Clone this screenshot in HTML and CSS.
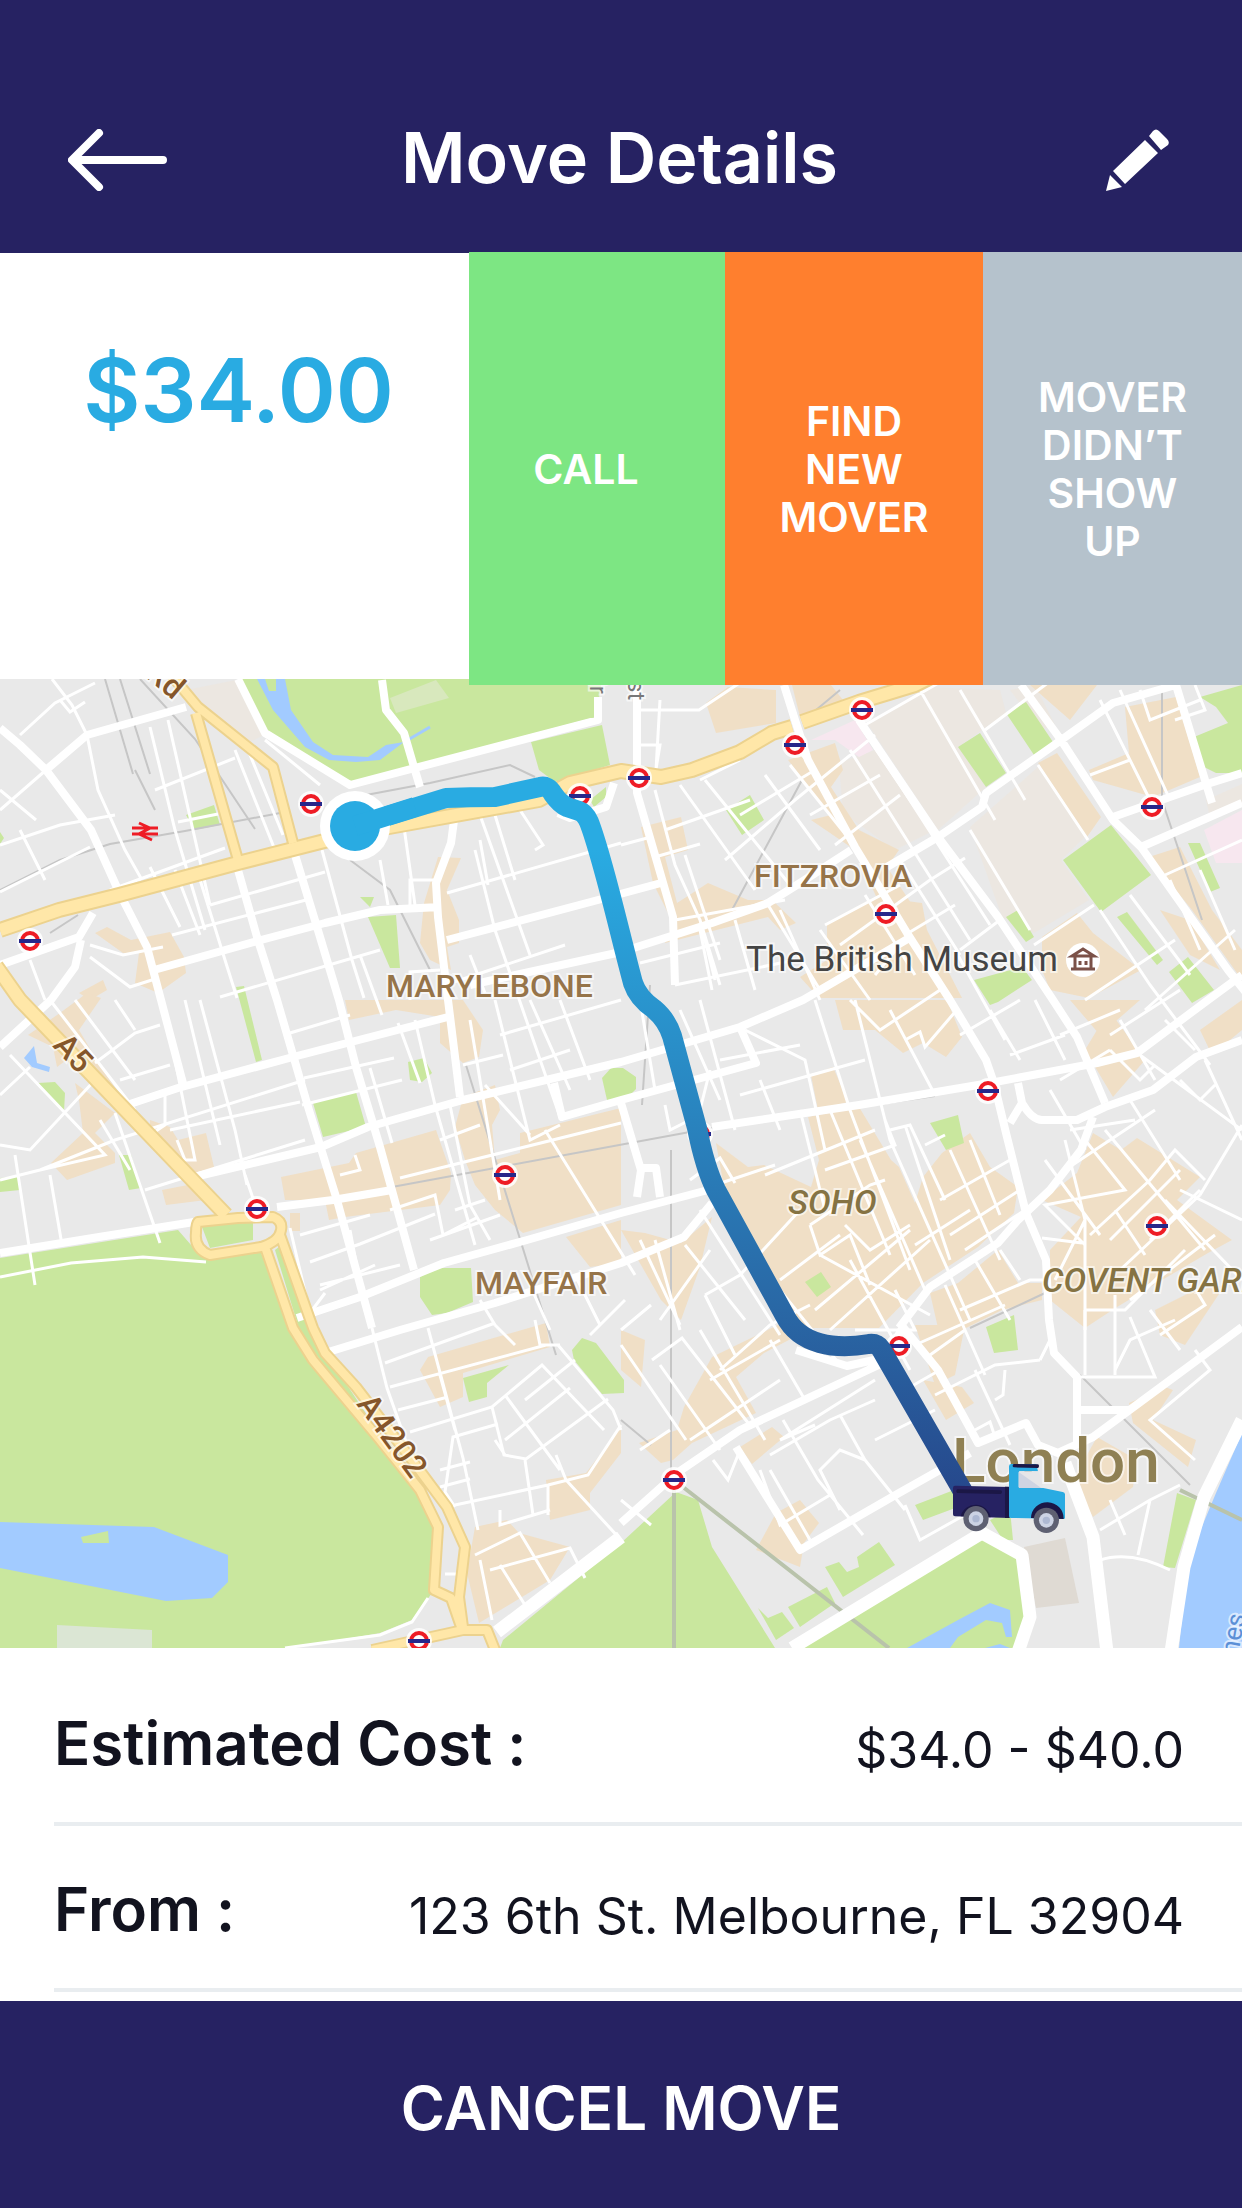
FILE: index.html
```html
<!DOCTYPE html>
<html lang="en">
<head>
<meta charset="utf-8">
<meta name="viewport" content="width=device-width, initial-scale=1">
<title>Move Details</title>
<link rel="stylesheet" href="styles.css">
</head>
<body>
<div class="screen">
  <header class="topbar">
    <button class="icon-button" type="button" aria-label="Back">
      <svg width="99" height="62" viewBox="0 0 99 62" fill="none" stroke="#fff" stroke-width="8" stroke-linecap="round" stroke-linejoin="round" aria-hidden="true">
        <path d="M31 4 4 31l27 27M6 31h89"/>
      </svg>
    </button>
    <h1 class="title">Move Details</h1>
    <button class="icon-button" type="button" aria-label="Edit">
      <svg width="64" height="62" viewBox="0 0 64 62" fill="#fff" aria-hidden="true">
        <path d="M43 7l4-5q3-3 6 0l8 8q3 3 1 6l-7 5zM39 11l13 13-33 31L7 42zM4 46l12 12L0 62z"/>
      </svg>
    </button>
  </header>

  <main class="content">
    <section class="summary">
      <p class="price">$34.00</p>
      <div class="actions">
        <button class="action action-call" type="button">CALL</button>
        <button class="action action-find" type="button">FIND<br>NEW<br>MOVER</button>
        <button class="action action-report" type="button">MOVER<br>DIDN’T<br>SHOW<br>UP</button>
      </div>
    </section>

    <svg class="map" viewBox="0 679 1242 969" role="img" aria-label="Route map of central London">
      <defs>
        <linearGradient id="route-fill" gradientUnits="userSpaceOnUse" x1="0" y1="850" x2="0" y2="1500">
          <stop offset="0" stop-color="#29abe2"/>
          <stop offset=".72" stop-color="#2966a4"/>
          <stop offset="1" stop-color="#26478b"/>
        </linearGradient>
        <g id="tube">
          <circle r="13" fill="#fff" opacity=".85"/>
          <circle r="8" fill="#fff" stroke="#ee1c25" stroke-width="4"/>
          <path d="M-11 0h22" stroke="#27278a" stroke-width="4"/>
        </g>
        <path id="main-road" d="M0 930l59-20 60-15 119-32 59-15 59-15 183-33 31-17 51-12 40 6 31-7 48-18 32-19 20-6M802 722l57-20 56-17 20-10M-4 966l24 34 206 215"/>
        <path id="side-road" d="M172 676l26 31 75 60 20 76M196 713l42 147M198 1222l40-4 35-1q10 4 8 13-2 12-20 17l-51 8q-16-6-14-22 0-9 2-11zM265 1247l28 81 20 32 67 80 40 50 18 37-4 63 17 8 10 29M279 1232l34 96 12 25 31 34 56 73 35 47 18 40-6 50 4 30M372 1650l91-20h24l8 20"/>
      </defs>

      <rect class="land" y="679" width="1242" height="969"/>

      <g class="campus">
        <path d="M867 723l60-36 73 3 6 23-48 34 28 40-48 43zM970 827l68-60 47 70-24 23 28 40-55 33-32-16zM839 763l36-13 60 80-40 20-52-37zM1206 800l36-16v20l-32 14zM1010 690l25-5 20 40-15 5zM186 690l50-10 28 55-20 10z"/>
      </g>
      <g class="hospital">
        <path d="M811 740l44-20 18 30-14 7-24-17zM1204 830l38-20v53h-26z"/>
      </g>

      <g class="shops">
        <path d="M95 933l12-6 24 13 39-8 14 25 2 16-28 20-23-10 4-30h-16zM79 993l24-13 4 10-17 10zM438 857l23 1-14 32 12 30v23l-12 4 4 23-21-10-10-17 4-40zM345 1000h118l20 30-4 27-16 6-23-20v-26l-44-7-47 10z"/>
        <path d="M28 1035l32-22 27-20 14 5-22 32 20 34 36 53-12 0-50-62-16 12-4-20zM75 1083l40 30-20 20 20 20v10l-48 17-16-17 32-30-4-33zM150 1120l20 7 8 13 28-7 8 34-16 13-48-33zM162 1190l36-7 8 17-40 5z"/>
        <path d="M281 1177l68-14 7-10 80-23 15 43-1 17-10 15-95 12-16 3-4-20h-40zM455 1127l8-30 32-12 5 25-8 15 3 35 25-7v-20l101-25v97l-98 28-28-23-20-25-10-25zM566 1237l55-17v43l-31 4zM290 1213h10v18h-10z"/>
        <path d="M706 703l22-16 48 3v33l-60 10zM792 685h39l12 15-43 17zM788 760l47-17 8 27-12 17 28 43 40 20-12 17 24 36-31 2-25-55-44-30 20-5zM641 827l40-10 7 33-23 7 12 46 31-20 40 17h24l24 23-16 7-12-13-103 26 8-20-20-40zM827 923l48-26 47 6 5 27 35 68H819l-19-21 27-17z"/>
        <path d="M835 1000h112l15 37-16 20-23-14-20 10-28-23h-32zM1042 937l35-24 16 20 48 37-52 28-39-8-8-20zM1038 763l19-10 44 64-14 20zM1125 707l51-10 24 80-47 20-60-17-4-10 40-17zM1149 857l31-10 32 63 30 40v30l-50-70zM1030 685h67l-27 35zM1160 910l30 10 30 50-30-15z"/>
        <path d="M716 1143l32 24 16-2 32 15 15 7 8-27-11-43 51-10 32 53 8 7 16 36 8-26 19-24 28-20 20 34 28 20-4 26-36 34-55 36-44 45h-91l-20-61-44-80zM811 1075l22-8 15 35-30 8zM958 1283l40-33 20 33h24v17l-40 10-36 18h-28l-8-35zM1093 1133l28 17 16-12 63 39-23 23 55 40-24 13-51 30-40 24-32 21-35-28v-50l31-33-39-17 35-27zM1085 1050l24-40 36 50-32 37zM1070 1000h70l-40 35z"/>
        <path d="M621 1230l24 3 36 10 31-26-12 50-19 53-20-20zM1155 1310l40-20 30-5-40 60-25-10zM1200 1030l42-30v30l-30 25z"/>
        <path d="M420 1370l8-13 118-34 4 24-87 26v24l-23 10zM475 1527l32-7 12 13 51 14-20 33-71 43-12-50zM546 1480l40-7 35-46v26l-31 40v17l-40 10zM677 1430l7-23 28-50 76-37h39l-63 33-28 24 20 36-64 30-19 17-12 3-22-20zM740 1447l32-20 12 10-32 27zM776 1513l24-13 19 23-15 20-4 24-44-17zM923 1380l39 7 12 16-28 17zM915 1325h50l-10 50-20 10zM1129 1403l36-16 8 3-20 30 43 20-8 27-55-44zM1073 1480l24-43 40 23-4 27-40 30zM621 1330l24 10-4 47-20-17z"/>
      </g>

      <g class="park">
        <path d="M242 679h360l-6 38-246 65-81-44zM531 742l71-17 8 40-55 17-16-12zM590 800l16-13v10l-12 10zM186 815l28-10 6 20-26 5zM360 897h14l-4 10zM368 917l28-2 4 53h-10zM236 987l8-1 18 74-6 2zM0 832l4 6-4 6z"/>
        <path d="M313 1103l43-11 10 35-43 10zM408 1062l16-4 8 15-10 9-12-2zM38 1083l17-1 10 11-1 19zM119 1155h12l10 33-12 2zM0 1178l18-1 2 13-20 2zM420 1277l16-9h35l2 34-26 11-15 2-12-18zM602 1078l9-10h12l13 9 0 12-9 9-20 2z"/>
        <path d="M0 1258l178-28 20 23h63l32 75 20 35 115 144 12 30-8 56-20 27-32 13-87 15H0zM202 1227l51-7v20l-43 8zM275 1250l10-8 30 95 120 180v20l-60-100-75-105z"/>
        <path d="M500 1648l3-8 118-97 55-51 22 8 14 47 63 101zM463 1378l46-13-22 18v14l-18 5zM572 1350l10-12 14 5 28 37v13l-22 1-28-34z"/>
        <path d="M958 747l22-14 26 40-20 14zM1006 713l20-11 27 40-19 13zM1063 860l48-35 40 50-50 37zM1117 917l10-5 36 48-6 5zM1188 843h12l20 45-10 4zM1169 972l19-15 26 33-22 13zM1006 917l12-7 16 27-8 5zM726 810l24-15 14 25-22 15zM974 980l48-13 10 13-34 22-8 3zM1200 697l42-12v88h-26l-12-6-10-30 34-14-12-16z"/>
        <path d="M930 1123l28-8 6 28-18 7zM805 1282l16-10 10 15-14 10zM986 1327l28-12 4 35-24 3zM825 1567l14-5 8 10 12-5-2-10 22-15 16 23-52 32zM788 1607l39-20 8 16-35 24zM758 1608l10 10 14-6 12 16-18 12zM915 1505l39-15 4 17-35 13zM1177 1493l19 7-21 68-12-1zM982 1533l36 20 9 64-13 31H798zM990 1520l20-10 3 30-10 0z"/>
      </g>

      <path fill="#dbe6d4" d="M57 1625l95 5v18H57z"/>
      <path fill="#dfdad3" d="M1024 1547l41-9 14 65-43 5z"/>
      <path fill="#d8e8bd" d="M390 698l46-18 13 18-53 15z"/>

      <g class="water">
        <path d="M257 679h28l6 31 22 32 20 13 35 2 18-12 18-3-24 18-24 2-27-2-24-13-32-37zM0 1522l154 5 74 28v27l-16 16-46 3-166-33zM1242 1433l-26 60-28 67-9 88h63zM907 1648l51-28 32-17 20 7 2 27h-6l-4-14-16-3-28 17-8 11zM985 1648l15-4 10 4zM24 1058l10-12 3 17 13 4-1 5-17-5zM1044 1450l8 5-6 6z"/>
        <path d="M406 741l24-14" stroke="#a2cbff" stroke-width="3"/>
      </g>
      <path class="park" d="M265 679h11v12h-7zM81 1537l27-6 1 12H83z"/>

      <g class="rail">
        <path d="M105 679l28 95M120 679l30 95M135 770l20 40"/>
        <path d="M140 679l55 60 60 90M0 890l60-30 50-16 75-13 95-18M50 933l28-18M350 860l40 30 40 80M350 798l80-15 80-18 25 12M650 985l-8 120M466 1065l90 290M392 1187l325-60M715 1128l220-32M802 780l-70 130M1162 690v110l20 60 20 60M840 690l-30 25M671 1150v330M970 1328l75-35M1080 1375l110 110M621 1420l30 25"/>
      </g>
      <path class="rail rail-wide" d="M674 1480v168M674 1480l215 168M1180 1490l62 30"/>

      <g class="streets">
        <path d="M52 679l20 26 15 30 11 55 27 60 17 30M20 735l35-32 40-20M0 810l46-40M0 845l60-20 55-10M0 790l36 30M60 700l10 12 15-10M150 727l25 103 30 100M168 720l42 185M155 790l80-32M235 750l40 100M248 750l35 85M178 822l40-8M110 890l115-42M0 892l90-45M265 740l55 45M20 830l25 50"/>
        <path d="M150 867l30 60M175 870l25 65M197 870l28 90 12 38M210 905l115-33M172 935l134-35M322 850l30 110 12 38M380 860l8 45M402 813l13 92M440 880h-30v30M447 893l174-50M475 850l20 80 65 187M480 840l8 45M480 815l50 140M520 810l23 35-8 5M495 815l20 65M445 985l30-10 90-30M470 955l15 38M410 1000v-28l30-2M220 997l160-47M90 957l40 30 25-8M30 960l15 40M90 945l33 10 40-8M360 955l22 60"/>
        <path d="M50 1000l85 110M75 1000l60 80M95 1063l40-30 25-8M185 1000l35 145M200 1000l35 130 12 55M165 1010l30 150-10 0-8-20M120 1080l50-15M165 1090v35l-12 8M10 1055l95 100-65 15-40 10M0 1145l30 5 65-70M15 1155l20 130M50 1175l12 70M115 1113l45 130M0 1095l30-28M40 1170l75-30 190-60M135 1030l-20-30M170 1130l130-28M145 1190l160-50M100 1120l30 50"/>
        <path d="M290 1033l60-18M302 1105l100-25M304 1078l90-20M370 1068l22 75M398 1023l22 60M415 1020l20 85 40 140M340 1175l20-5-5-15M400 1178l221-55M463 1065l40-10M450 1105l20 100 20 35M470 1020l20 120 10 60M495 1000l35 140 30-15M530 1000l40 90M560 1000l30 80M500 1035l121-35M510 1070l60-20M485 1085l45 50M440 1140l40-15M455 1210l30-10M290 1228l20 85M300 1235l70-20M310 1262l50-18 75-30M320 1290l55-25M310 1313l15-20M390 1210l45-15 8 40 35-18M430 1240l70-25M545 1130l90 145M350 1230l15 80M245 1175l12 35M320 1285l80-20"/>
        <path d="M372 1328l15 60 22 62M428 1328l35 130 15 72M385 1363l110-40M390 1387l156-42 12 0 55 65 8 20M398 1410l50-13M410 1432l82-25 50-42 62 65M505 1395l55 75M492 1407l12 48 22 4 82-60M525 1400l50-40M505 1440l65-52M525 1460l8 55M455 1507l-10-15 8-55 45-13M440 1487l30-8M440 1470l30-8M455 1505l93-20 40-10 33-50M500 1510v15l50-15M548 1485v30M556 1455l10 25 55 60M440 1375l15 55M495 1440l10 15M495 1325l20 20M535 1320l5 25 20 0M475 1555l45-22 30 50M490 1570l80-22 15 30M480 1560l12 60M500 1565l25 40M445 1574h12M590 1335l35-35M480 1300l15 25M530 1285l20 45M575 1275l25 50"/>
        <path d="M660 700l-4 70M637 710h62l60-40M640 745h20l-5 30M700 780l40-20M655 790l20 75 25 55 15 60M680 785l75 105M700 920l20 65M685 855l35 105M655 857l45-13M621 845l30-8M665 830l85-30M705 780l85 105M725 860l70-60 80-65M765 775l55 75M785 735l30 35-75 45M790 765l60 75M850 710l50 75 90 140M810 815l70-40M835 845l65-50M850 750l120 190M865 725l140-80M920 690l75 130M960 690l65 110M970 830l60 100M900 860l60 95M825 925l75-40M840 945l90-65 35-22M820 930l50 70M865 895l50 80M875 975l35-42M765 900l55 90M905 935l50-30M960 950l40-30M675 920l110-20M640 963l80-20M675 985l120-25M700 930l12 60M735 920l20 70M780 910l40 90"/>
        <path d="M985 730l80-60M1100 700l55 110M1090 775l40-15M1120 690l50 110M1140 690l10 30 50-20M1195 685l10 25-30 10M1038 765l50 75M1100 910l50 75 60 80M1130 895l60 80M1034 945l60-40M1145 1010l90-80M1110 1035l70-45M1165 875l77-35M1170 880l30 70M1200 870l35 80M1085 1000l90-60M1060 1035l60-25M1010 1055l55-20M960 1035l60-35M955 950l50 90M990 1010l30 50M1035 1000l30 60"/>
        <path d="M640 1000l15 90M680 1010l40 90M700 1000l35 130M745 1030l60 30 20 90M720 1060l80-15M740 1095l125-35M760 1080l20 50M815 1000l35 110 60 160M855 1000l35 140 80 180M850 1000l30 30 60-40M890 1010l45 85M905 1040l15-8 5 15 30-35M800 1110l25 100M830 1110l60 145M860 1140l65 150M885 1120l10 25-70 25M765 1175l110-45M775 1165l-60 20M690 1180l30-22 15 25M890 1130l20-5 35 75M905 1125l45 135M950 1150l50 110M970 1140l30 75M925 1145l20-10M940 1200l70-40M950 1235l70-45M965 1250l60-40M915 1245l55-35M810 1225l60-40 15-5M810 1225l10 30 30-20 20 50M820 1255l110 60M780 1280l60-45M815 1310l95-80M845 1225l25 25 40-25M850 1260l60 110M830 1330l100-90M760 1265l80 100"/>
        <path d="M700 1110l10-40M665 1105l5 25 30-15M655 1240l25 90M685 1245l60 75M700 1210l80 125M640 1240l40 85M660 1320l50-70M705 1295l35-20 60-65M705 1295l30 60M621 1330l30-25M895 1290l20 40h-60M975 1260l35 60M945 1285l40 90M960 1310l70-30 15 0M1000 1250l20 30"/>
        <path d="M1065 1140l20 80-30 60M1085 1220v110M1085 1140l40 50-80 15 40 40M1045 1160l55 75M1065 1170l90-60M1070 1130l65-10M1105 1130l100 120M1110 1240l70-70M1090 1235l60-55 25-30 30 30M1115 1210l30 45M1165 1200l77 80M1180 1190l62 30M1200 1195l42-70M1120 1270l80-75M1150 1240l50-50M1130 1300l85-65M1085 1310h40l60-60M1042 1238l40 5M1115 1295v80M1150 1310l30 40M1190 1280l15 25-45 30M1050 1090l35 60M1060 1080l50-30M1110 1050l30 30 15-15M1120 1020l35 60M1180 1080l20 20 15-15M1140 1055l102 75M1130 1100l50 80M1205 1060l37 80M1165 1020l30 30"/>
        <path d="M652 1360l30-22 70 90M660 1365l60 85M700 1330l65 110M720 1370l50-45 40-20M710 1380l70-40M770 1340l35 60M690 1440l90-60M640 1450l30-20M621 1345l65 95M780 1440l95-60M770 1455l60-35 45-20M783 1420l35 60 45 55M840 1415l25 45-25-10-20 20 20 40M865 1460l40 50M875 1440l60-30M770 1470l40 70M760 1470l20 55 50-30M780 1440l35-15M905 1390l35-20M915 1345l90-40M930 1355l35-25M935 1395l60-30 45-5M975 1370l35 75M1005 1370l-2 25-8 5M1040 1360l10-20M1080 1377h75l-25-60M1085 1310v65M1115 1370l15-30 45-20M1195 1350l15 20-60 50 45 40M975 1430l15-8 5 15M1100 1530l50-30 30-15M1110 1500l15 35M1100 1560q30-10 70 10M1150 1500l-12 55M905 1505l15 35 50-28M740 1450l-12 30-15-20M621 1500l30 25"/>
      </g>

      <g class="roads">
        <path d="M0 728l20 17 26 25 45 60 28 62 28 55 37 140M46 770l41-35 99-28M238 679l27 54 85 52 248-65v-23M382 680l4 30 18 23 10 34 6 20M238 870l19 67 20 63 32 110 28 90 35 128M295 855l22 72 22 73 17 67 24 80 34 123M154 970l107-30 64-17 55-13 60-3M455 813l-4 30-15 40 2 34 10 83 12 97M447 940l151-40 63-17M470 985l151-33 91-29 56-20 32-20 51-33M0 965l79-28 14-24M81 940l-6 27-24 33-51 47M558 813l12 5 36-11 8-24"/>
        <path d="M127 1105l51-17 115-31 155-40M194 1177l127-30 47-20 95-27 158-38 119-35 63-27 108-63M277 1207l56-7 59-10M712 1127l147-22 131-22 107-20 40-10 71-53 34-25M554 1083l8 34 59-17 135-37-16-36M621 1103l20 67-4 27M641 1168h15l4 29M0 1253l99-16 95-15M297 1318l63-21 84-34 83-23 94-27 87-23M325 1353l75-23 95-27 126-40 63-26 28-34"/>
        <path d="M637 687v106l36 124 2 68M784 685l11 35 13 40 47 87 28 46 24 40 43 67 36 60 8 23 12 50 20 80 20 47 3 60 5 33 23 24v66M859 720l79 117 60 80 55 83 24 37 28 66M1021 685l40 55 52 80 28 27 87 123 20 25M887 867l51-30 44-30 4-14 71-50 56-40 63-18 36 118M1113 817l91-32 38-12M1141 847l101-44"/>
        <path d="M1018 1083l4 20-12 20M1022 1103q10 17 20 17h35l28-13 48-17 43-33 46-17M1093 1117l-12 33-31 40-32 30-20 23-68 44-31 41M903 1327l-20 36-143 67-63 43-56 50M796 1350l51 16 36-8M903 1327l35 43 40 73 48-20 12 22 20 8 35-16 149-110M970 1453l-71 40-99 57-64-103M1077 1410h52"/>
      </g>
      <g class="roads roads-wide">
        <path d="M792 1648l190-115 40 22 8 62-12 35M1065 1463l28 74 14 115M1242 1420l-38 77-20 70-13 85M497 1632l124-95"/>
      </g>
      <path class="path" d="M0 1277l71-14 72-6 63 5M285 1648l95-13 32-13 16-24"/>

      <g class="highway-edge">
        <use href="#main-road"/>
        <use class="narrow" href="#side-road"/>
      </g>
      <g class="highway">
        <use href="#main-road"/>
        <use class="narrow" href="#side-road"/>
      </g>

      <path fill="none" stroke="#ee1c25" stroke-width="3" d="M132 828h26M132 834h26M139 823l11 5-11 6 13 6"/>

      <use href="#tube" x="311" y="804"/>
      <use href="#tube" x="30" y="941"/>
      <use href="#tube" x="580" y="796"/>
      <use href="#tube" x="639" y="778"/>
      <use href="#tube" x="795" y="745"/>
      <use href="#tube" x="862" y="710"/>
      <use href="#tube" x="1152" y="807"/>
      <use href="#tube" x="886" y="914"/>
      <use href="#tube" x="257" y="1209"/>
      <use href="#tube" x="505" y="1175"/>
      <use href="#tube" x="700" y="1134"/>
      <use href="#tube" x="988" y="1091"/>
      <use href="#tube" x="1157" y="1226"/>
      <use href="#tube" x="419" y="1641"/>
      <use href="#tube" x="899" y="1346"/>
      <use href="#tube" x="674" y="1480"/>

      <g class="place">
        <text x="386" y="997">MARYLEBONE</text>
        <text x="754" y="887">FITZROVIA</text>
        <text x="475" y="1294">MAYFAIR</text>
      </g>
      <g class="place place-district">
        <text x="788" y="1214">SOHO</text>
        <text x="1042" y="1292">COVENT GARDEN</text>
      </g>
      <text class="poi" x="746" y="971">The British Museum</text>
      <circle cx="1083" cy="960" r="17" fill="#fff"/>
      <path d="M1072 956l11-7 11 7zM1075 957v11m16-11v11M1071 969h24M1080 961v4m6-4v4" fill="none" stroke="#7b5148" stroke-width="3"/>
      <text class="city" x="952" y="1482">London</text>
      <g class="road-name">
        <text transform="translate(52 1046) rotate(47)">A5</text>
        <text transform="translate(356 1404) rotate(54)">A4202</text>
        <text transform="translate(144 676) rotate(40)">Rd</text>
      </g>
      <g class="street-name">
        <text transform="translate(590 680) rotate(90)">ir</text>
        <text transform="translate(628 680) rotate(90)">st</text>
      </g>
      <text class="river-name" transform="translate(1238 1656) rotate(-80)">nes</text>

      <path class="route" d="M355 826L446 798Q470 797 495 797L540 787Q548 785 553 794Q560 804 567 807L579 811Q585 813 589 822C603 858 620 935 633 983Q638 998 654 1009Q667 1020 672 1036L697 1128C701 1148 706 1170 716 1190L785 1316C800 1345 835 1350 869 1344Q877 1343 881 1349L965 1495"/>
      <circle cx="355" cy="826" r="35" fill="#fff"/>
      <circle cx="355" cy="826" r="25" fill="#29abe2"/>
      <path d="M355 826l60-19" stroke="#29abe2" stroke-width="20"/>

      <g transform="translate(930 1430) scale(.3333)">
        <path fill="#262262" d="M75 167l163 4v93L75 259q-6 0-6-6v-79q0-7 6-7z"/>
        <path fill="#1b1746" d="M225 170h14v94h-14zM82 178l130 3q4 0 4 5t-4 6l-130-3q-3-1-3-5t3-6zM92 259a46 46 0 0 1 90 3z"/>
        <path fill="#29abe2" d="M247 102h72l5 22h-56v49l72 1 58 12q7 1 7 7v70q0 4-4 4l-158-3q-6 0-6-6V109q0-7 7-7z"/>
        <path fill="#e6e6e8" d="M270 124h56l14 50h-70q-4 0-4-4v-42q0-4 4-4z"/>
        <path fill="#ced4e2" d="M266 126l68 48h-64q-4 0-4-4z"/>
        <path fill="#1b1746" d="M252 102l72 1q3 0 3 5t-3 6l-72-2q-4 0-4-5t4-5zM303 264a46 46 0 0 1 98 3z"/>
        <g fill="#5e6072"><circle cx="138" cy="266" r="38"/><circle cx="349" cy="271" r="38"/></g>
        <g fill="#ccd3e4"><circle cx="138" cy="266" r="22"/><circle cx="349" cy="271" r="22"/></g>
        <g fill="#adb8d2"><circle cx="138" cy="266" r="11"/><circle cx="349" cy="271" r="11"/></g>
      </g>
    </svg>

    <dl class="details">
      <div class="row"><dt>Estimated Cost :</dt><dd>$34.0 - $40.0</dd></div>
      <div class="row"><dt>From :</dt><dd>123 6th St. Melbourne, FL 32904</dd></div>
    </dl>
  </main>

  <button class="cancel" type="button">CANCEL MOVE</button>
</div>
</body>
</html>
```
FILE: styles.css
```css
* {
  box-sizing: border-box;
}

body {
  margin: 0;
  background: #fff;
  color: #12131f;
  font-family: Inter, "Liberation Sans", sans-serif;
}

button {
  margin: 0;
  padding: 0;
  border: 0;
  background: none;
  color: #fff;
  font: inherit;
}

.screen {
  display: flex;
  flex-direction: column;
  min-height: 100vh;
}

.topbar {
  display: flex;
  align-items: center;
  justify-content: space-between;
  height: 253px;
  padding: 66px 72px 0 68px;
  background: #262262;
}

.icon-button {
  display: flex;
}

.title {
  flex: 1;
  margin: 0;
  padding: 0 34px 4px 0;
  color: #fff;
  font-size: 70px;
  font-weight: 600;
  line-height: 84px;
  text-align: center;
}

.content {
  flex: 1;
}

.summary {
  display: grid;
  grid-template-columns: 469fr 773fr;
  height: 426px;
}

.price {
  margin: 0;
  padding: 83px 0 0 8px;
  color: #29abe2;
  font-size: 88px;
  font-weight: 600;
  line-height: 108px;
  text-align: center;
}

.actions {
  position: relative;
  display: grid;
  grid-template-columns: 256fr 258fr 259fr;
  margin: -1px 0 -6px;
}

.action {
  font-size: 41px;
  font-weight: 600;
  line-height: 48px;
}

.action-call {
  padding-right: 22px;
  background: #7de683;
}

.action-find {
  background: #ff7f2e;
}

.action-report {
  background: #b5c2cc;
}

.map {
  display: block;
  width: 100%;
  height: auto;
  font-family: Roboto, "Liberation Sans", sans-serif;
}

.land {
  fill: #e9e9e9;
}

.campus {
  fill: #ece7e1;
}

.hospital {
  fill: #f7e7ef;
}

.shops {
  fill: #f0dfc6;
}

.park {
  fill: #c9e79e;
}

.water {
  fill: #a2cbff;
}

.rail {
  fill: none;
  stroke: #c6c6c6;
  stroke-width: 2;
}

.rail-wide {
  stroke: #b9c3ab;
  stroke-width: 4;
}

.streets,
.path {
  fill: none;
  stroke: #fff;
  stroke-width: 3;
}

.roads {
  fill: none;
  stroke: #fff;
  stroke-width: 8;
  stroke-linejoin: round;
}

.roads-wide {
  stroke-width: 13;
}

.highway,
.highway-edge {
  fill: none;
  stroke-linejoin: round;
}

.highway-edge {
  stroke: #ecd28e;
  stroke-width: 16;
}

.highway {
  stroke: #ffe7a8;
  stroke-width: 12;
}

.highway-edge .narrow {
  stroke-width: 12;
}

.highway .narrow {
  stroke-width: 8;
}

.map text {
  paint-order: stroke;
  stroke: #fff;
  stroke-opacity: .6;
  stroke-width: 4;
}

.place {
  fill: #967449;
  font-size: 32px;
  font-weight: 500;
}

.place-district {
  fill: #857343;
  font-size: 34px;
  font-style: italic;
}

.poi {
  fill: #444;
  font-size: 35px;
}

.city {
  fill: #8f8053;
  font-size: 62px;
  font-weight: 500;
}

.road-name {
  fill: #85562a;
  font-size: 32px;
  font-weight: 500;
}

.street-name {
  fill: #777;
  font-size: 24px;
}

.river-name {
  fill: #5b8fd6;
  font-size: 26px;
}

.route {
  fill: none;
  stroke: url(#route-fill);
  stroke-width: 20;
  stroke-linejoin: round;
}

.details {
  margin: 0;
  padding: 12px 0 9px 54px;
}

.row {
  display: flex;
  align-items: center;
  justify-content: space-between;
  height: 166px;
  padding-right: 58px;
  border-bottom: 4px solid #e9edf0;
}

.row dt {
  padding-top: 4px;
  font-size: 60px;
  font-weight: 600;
}

.row dd {
  margin: 0;
  padding-top: 18px;
  font-size: 50px;
}

.cancel {
  height: 207px;
  padding-top: 6px;
  background: #262262;
  font-size: 60px;
  font-weight: 600;
}
```
